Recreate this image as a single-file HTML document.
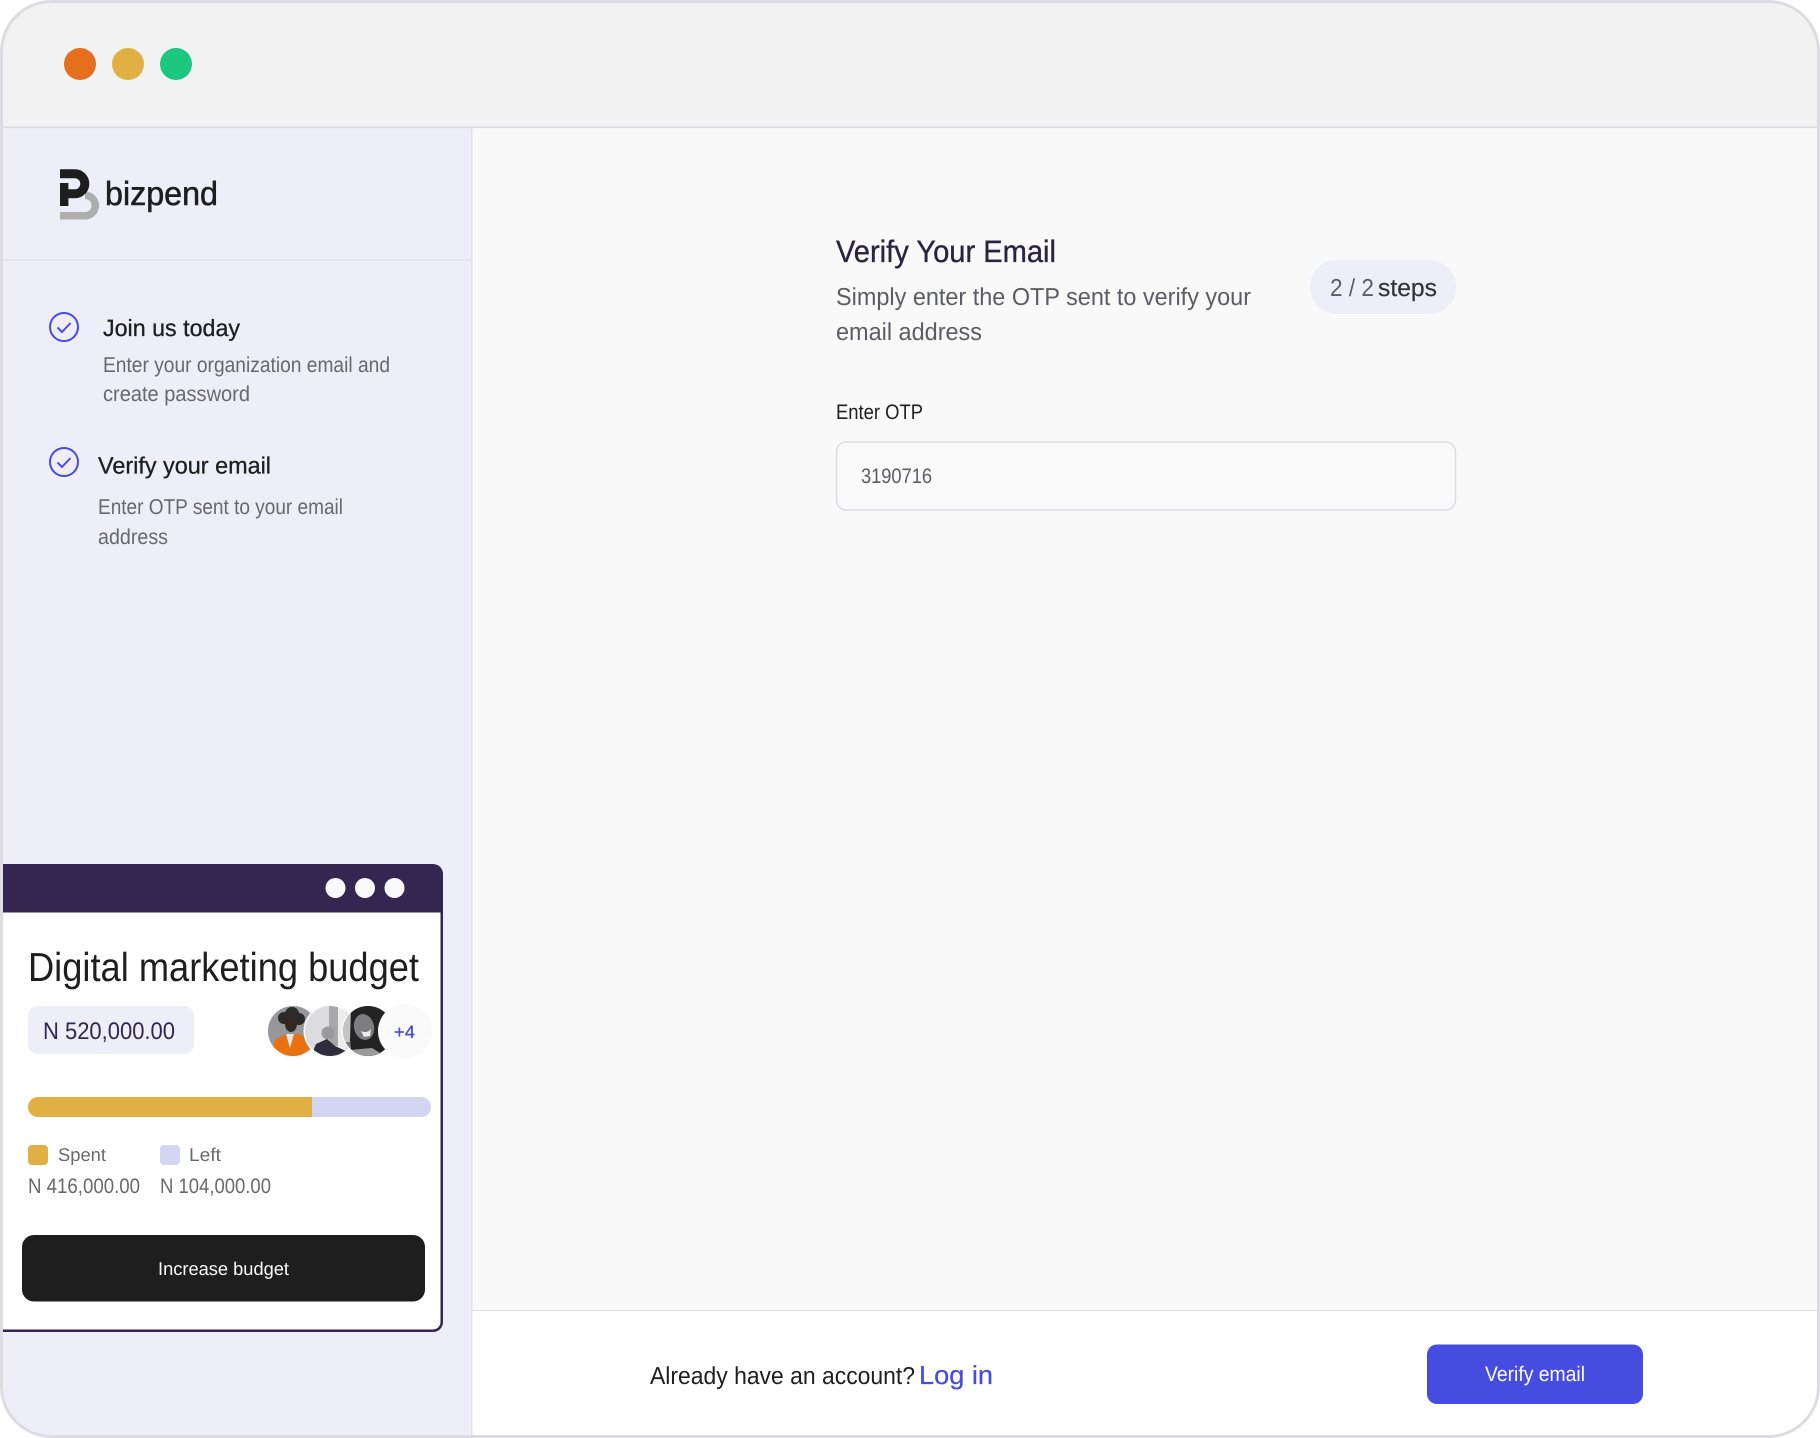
<!DOCTYPE html>
<html lang="en"><head><meta charset="utf-8"><title>Verify Your Email</title>
<style>
html,body{margin:0;padding:0;background:#fff;width:1820px;height:1438px;overflow:hidden}
svg{display:block;font-family:"Liberation Sans",sans-serif;text-rendering:geometricPrecision}
</style></head><body>
<svg xmlns="http://www.w3.org/2000/svg" width="1820" height="1438" viewBox="0 0 1820 1438">
<defs>
<clipPath id="frame"><rect x="1.5" y="1.5" width="1817" height="1435" rx="50" ry="50"/></clipPath>
<clipPath id="a1"><circle cx="293" cy="1031" r="25"/></clipPath>
<clipPath id="a2"><circle cx="330" cy="1031" r="25"/></clipPath>
<clipPath id="a3"><circle cx="368" cy="1031" r="25"/></clipPath>
</defs>
<rect width="1820" height="1438" fill="#fff"/>
<g clip-path="url(#frame)">
  <rect x="0" y="0" width="1820" height="127" fill="#f2f2f2"/>
  <rect x="0" y="127" width="472" height="1311" fill="#eeeef8"/>
  <rect x="472" y="127" width="1348" height="1183" fill="#f9f9f9"/>
  <rect x="472" y="1310" width="1348" height="128" fill="#fff"/>
  <rect x="0" y="126.5" width="1820" height="1.6" fill="#dcdce2"/>
  <rect x="471" y="128" width="1.4" height="1310" fill="#e3e3ea"/>
  <rect x="0" y="259.5" width="471" height="1.2" fill="#dfdfe6"/>
  <rect x="472" y="1310" width="1348" height="1.2" fill="#e3e3ea"/>
</g>
<rect x="1.5" y="1.5" width="1817" height="1435" rx="50" ry="50" fill="none" stroke="#dcdce2" stroke-width="3"/>

<circle cx="80" cy="64" r="16" fill="#e56f1d"/>
<circle cx="128" cy="64" r="16" fill="#e0b043"/>
<circle cx="176" cy="64" r="16" fill="#1bc67f"/>

<!-- logo -->
<path d="M60 215.8H85A10.3 10.3 0 0 0 85 195.2" fill="none" stroke="#aeaeae" stroke-width="7.5"/>
<path d="M60 173.8H74.8A10 10 0 0 1 74.8 193.8H64" fill="none" stroke="#1e1e1e" stroke-width="9"/>
<rect x="60" y="183" width="8.4" height="23" fill="#1e1e1e"/>
<text x="105" y="205" font-size="33.5" fill="#1e1e1e" stroke="#1e1e1e" stroke-width=".55" textLength="113" lengthAdjust="spacingAndGlyphs">bizpend</text>

<!-- steps -->
<circle cx="64" cy="327" r="14" fill="none" stroke="#464ce0" stroke-width="2"/>
<path d="M57.5 327.5l4.5 4.5 8.5-9" fill="none" stroke="#464ce0" stroke-width="2"/>
<text x="103" y="336" font-size="23.5" fill="#1e1e1e" stroke="#1e1e1e" stroke-width=".3" textLength="137" lengthAdjust="spacingAndGlyphs">Join us today</text>
<text x="103" y="372" font-size="21.5" fill="#68686e" textLength="287" lengthAdjust="spacingAndGlyphs">Enter your organization email and</text>
<text x="103" y="401" font-size="21.5" fill="#68686e" textLength="147" lengthAdjust="spacingAndGlyphs">create  password</text>

<circle cx="64" cy="462" r="14" fill="none" stroke="#464ce0" stroke-width="2"/>
<path d="M57.5 462.5l4.5 4.5 8.5-9" fill="none" stroke="#464ce0" stroke-width="2"/>
<text x="98" y="473.5" font-size="23.5" fill="#1e1e1e" stroke="#1e1e1e" stroke-width=".3" textLength="173" lengthAdjust="spacingAndGlyphs">Verify your email</text>
<text x="98" y="514" font-size="21.5" fill="#68686e" textLength="245" lengthAdjust="spacingAndGlyphs">Enter OTP sent to your  email</text>
<text x="98" y="544" font-size="21.5" fill="#68686e" textLength="70" lengthAdjust="spacingAndGlyphs">address</text>

<!-- card -->
<path d="M3 864H433A10 10 0 0 1 443 874V1322A10 10 0 0 1 433 1332H3Z" fill="#332650"/>
<path d="M3 912.5H440.5V1322A7.5 7.5 0 0 1 433 1329.5H3Z" fill="#fff"/>
<circle cx="335.500" cy="888" r="10" fill="#fafafa"/>
<circle cx="365" cy="888" r="10" fill="#fafafa"/>
<circle cx="394.500" cy="888" r="10" fill="#fafafa"/>
<text x="28" y="981" font-size="40.500" fill="#1e1e1e" textLength="391" lengthAdjust="spacingAndGlyphs">Digital marketing budget</text>
<rect x="28" y="1006" width="166" height="48" rx="10" fill="#eeeef8"/>
<text x="43" y="1039" font-size="24" fill="#332650" textLength="132" lengthAdjust="spacingAndGlyphs">N 520,000.00</text>

<!-- avatars -->
<circle cx="293" cy="1031" r="26.500" fill="#fafafa"/>
<g clip-path="url(#a1)">
  <rect x="268" y="1006" width="50" height="50" fill="#96979b"/>
  <circle cx="284" cy="1018" r="6" fill="#2b2a2a"/>
  <circle cx="292" cy="1014" r="7" fill="#2b2a2a"/>
  <circle cx="299" cy="1019" r="6" fill="#2b2a2a"/>
  <ellipse cx="291" cy="1024" rx="6" ry="8" fill="#35261f"/>
  <path d="M270 1056L275 1040 286 1034H298L310 1038 316 1050V1056Z" fill="#e8720f"/>
  <path d="M286 1034h8l-4 14z" fill="#e4e6ec"/>
</g>
<circle cx="330" cy="1031" r="26.500" fill="#fafafa"/>
<g clip-path="url(#a2)">
  <rect x="305" y="1006" width="50" height="50" fill="#dcdcde"/>
  <rect x="329" y="1006" width="9" height="40" fill="#a8a8aa"/>
  <rect x="338" y="1006" width="8" height="44" fill="#ededed"/>
  <circle cx="328" cy="1033" r="6.500" fill="#9a9a9d"/>
  <path d="M311 1056L316 1044 327 1039 335 1046 348 1052V1056Z" fill="#2f2c3c"/>
</g>
<circle cx="368" cy="1031" r="26.500" fill="#fafafa"/>
<g clip-path="url(#a3)">
  <rect x="343" y="1006" width="50" height="50" fill="#7a7a7c"/>
  <rect x="343" y="1012" width="8" height="30" fill="#c4c4c4"/>
  <path d="M351 1006H393V1056H352L350 1040Z" fill="#232323"/>
  <ellipse cx="364" cy="1027" rx="10" ry="13" fill="#7e7e80" transform="rotate(-12 364 1027)"/>
  <path d="M361 1031q6 3 10-2l-1 7-6 1z" fill="#eee"/>
  <path d="M350 1050L372 1048 385 1056H350Z" fill="#9a9a9c"/>
</g>
<circle cx="405" cy="1031" r="27" fill="#fafafa"/>
<text x="394" y="1038" font-size="18" fill="#464ce0" stroke="#464ce0" stroke-width=".3" textLength="21" lengthAdjust="spacingAndGlyphs">+4</text>

<!-- progress -->
<rect x="28" y="1097" width="403" height="20" rx="10" fill="#d4d4f3"/>
<path d="M312 1097H38A10 10 0 0 0 38 1117H312Z" fill="#e0b043"/>
<rect x="28" y="1145" width="20" height="20" rx="4" fill="#e0b043"/>
<rect x="160" y="1145" width="20" height="20" rx="4" fill="#d4d4f3"/>
<text x="58" y="1161" font-size="18.500" fill="#68686e" textLength="48" lengthAdjust="spacingAndGlyphs">Spent</text>
<text x="189" y="1161" font-size="18.500" fill="#68686e" textLength="32" lengthAdjust="spacingAndGlyphs">Left</text>
<text x="28" y="1193" font-size="21" fill="#68686e" textLength="112" lengthAdjust="spacingAndGlyphs">N 416,000.00</text>
<text x="160" y="1193" font-size="21" fill="#68686e" textLength="111" lengthAdjust="spacingAndGlyphs">N 104,000.00</text>
<rect x="22" y="1235" width="403" height="66.500" rx="12" fill="#1e1e1e"/>
<text x="158" y="1275" font-size="18.500" fill="#fafafa" textLength="131" lengthAdjust="spacingAndGlyphs">Increase budget</text>

<!-- main -->
<text x="836" y="262" font-size="31" fill="#2a2342" stroke="#2a2342" stroke-width=".35" textLength="220" lengthAdjust="spacingAndGlyphs">Verify Your Email</text>
<text x="836" y="305" font-size="24.500" fill="#5c5c64" textLength="415" lengthAdjust="spacingAndGlyphs">Simply enter the OTP sent to verify your</text>
<text x="836" y="340" font-size="24.500" fill="#5c5c64" textLength="146" lengthAdjust="spacingAndGlyphs">email address</text>
<rect x="1310" y="260" width="146" height="54" rx="27" fill="#eeeef8"/>
<text x="1330" y="296" font-size="24.500" fill="#5c5c64" textLength="44" lengthAdjust="spacingAndGlyphs">2 / 2</text>
<text x="1378" y="296" font-size="24.500" fill="#333338" stroke="#333338" stroke-width=".2" textLength="59" lengthAdjust="spacingAndGlyphs">steps</text>
<text x="836" y="419" font-size="21" fill="#1e1e1e" textLength="87" lengthAdjust="spacingAndGlyphs">Enter OTP</text>
<rect x="836.500" y="442" width="619" height="68" rx="10" fill="#fafafa" stroke="#dcdce2" stroke-width="1.500"/>
<text x="861" y="483" font-size="21" fill="#5c5c64" textLength="71" lengthAdjust="spacingAndGlyphs">3190716</text>

<!-- footer -->
<text x="650" y="1384" font-size="24.500" fill="#1e1e1e" textLength="265" lengthAdjust="spacingAndGlyphs">Already have an account?</text>
<text x="919" y="1384" font-size="26" fill="#464ce0" stroke="#464ce0" stroke-width=".25" textLength="74" lengthAdjust="spacingAndGlyphs">Log in</text>
<rect x="1427" y="1344.500" width="216" height="59.500" rx="10" fill="#464ce0"/>
<text x="1485" y="1381" font-size="21" fill="#fafafa" textLength="100" lengthAdjust="spacingAndGlyphs">Verify email</text>
</svg>
</body></html>
